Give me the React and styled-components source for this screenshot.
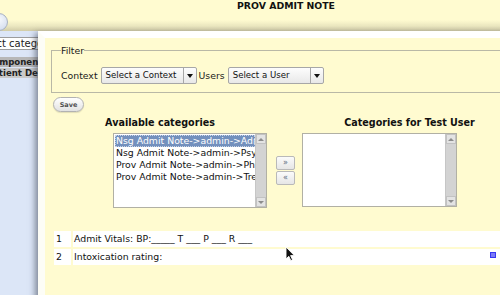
import React from "react";
import styled, { createGlobalStyle } from "styled-components";

const GlobalStyle = createGlobalStyle`
  html, body { margin: 0; padding: 0; width: 500px; height: 295px; overflow: hidden; }
  body {
    font-family: "DejaVu Sans", Verdana, sans-serif;
    font-size: 9.33px;
    color: #151515;
    background: #dce6f7;
  }
  #root { width: 500px; height: 295px; }
`;

const Page = styled.div`
  position: relative;
  width: 500px;
  height: 295px;
  overflow: hidden;
  background: #dce6f7;
`;

const Header = styled.header`
  height: 31px;
  display: flex;
  flex-direction: column;
  align-items: flex-start;
  background: linear-gradient(to bottom, #fffbd0 0%, #fffbd0 64%, #ebe7c0 84%, #d1cca7 100%);
`;

const Title = styled.h1`
  margin: 0;
  padding-left: 237px;
  font-size: 9.33px;
  line-height: 11px;
  font-weight: bold;
  color: #111;
  white-space: nowrap;
`;

const RoundButton = styled.div`
  margin: 2px 0 0 -10px;
  width: 18px;
  height: 18px;
  box-sizing: border-box;
  border-radius: 50%;
  border: 1px solid #a8b1c2;
  background: radial-gradient(circle at 50% 35%, #f6f8fc, #cdd8eb);
  display: flex;
  align-items: center;
  justify-content: flex-end;
  padding-right: 7px;
`;

const Dot = styled.span`
  width: 3px;
  height: 3px;
  border-radius: 50%;
  background: #3d63b8;
`;

const Behind = styled.div`
  display: flex;
  flex-direction: column;
  align-items: flex-start;
  margin-left: -15px;
  padding-top: 6px;
  width: 220px;
`;

const BehindInput = styled.div`
  margin-left: -13px;
  width: 160px;
  height: 13px;
  box-sizing: border-box;
  border: 1px solid #9c9c9c;
  background: #fff;
  font-size: 10px;
  line-height: 11px;
  padding-left: 2px;
  white-space: nowrap;
  color: #222;
`;

const BehindRow = styled.div`
  align-self: stretch;
  margin-top: ${(p) => p.$top}px;
  height: 10px;
  line-height: 10px;
  background: ${(p) => p.$bg};
  font-weight: bold;
  font-size: 8.6px;
  padding-left: 2px;
  white-space: nowrap;
  color: #222;
`;

const Dialog = styled.section`
  position: absolute;
  left: 38px;
  top: 31px;
  width: 540px;
  height: 290px;
  box-sizing: border-box;
  background: #fffbd0;
  border-top: 7px solid #ffffff;
  border-left: 7px solid #fdfdf6;
  box-shadow: -3px 2px 6px rgba(40, 46, 62, 0.5);
  display: flex;
  flex-direction: column;
  align-items: flex-start;
`;

const FilterSet = styled.fieldset`
  margin: 7px 0 0 6px;
  width: 480px;
  border: 1px solid #b9b8a6;
  padding: 11px 8px 8px 9px;
`;

const Legend = styled.legend`
  padding: 0;
  font-size: 9.33px;
  line-height: 11px;
  color: #1a1a1a;
`;

const FilterRow = styled.div`
  display: flex;
  align-items: center;
  gap: 2px;
  height: 17px;
`;

const Label = styled.span`
  white-space: nowrap;
  color: #1a1a1a;
  margin-right: 1px;
`;

const Select = styled.div`
  display: flex;
  width: ${(p) => p.$w}px;
  height: 17px;
  box-sizing: border-box;
  border: 1px solid #a7a7a7;
  border-radius: 2px;
  background: linear-gradient(to bottom, #fdfdfd, #e8e8e8);
  font-size: 8.6px;
  color: #111;
`;

const SelectText = styled.span`
  flex: 1;
  padding-left: 4px;
  line-height: 15px;
  white-space: nowrap;
  overflow: hidden;
`;

const SelectArrow = styled.span`
  width: 12px;
  border-left: 1px solid #a7a7a7;
  display: flex;
  align-items: center;
  justify-content: center;
`;

const Triangle = styled.span`
  width: 0;
  height: 0;
  border-left: 3px solid transparent;
  border-right: 3px solid transparent;
  border-top: ${(p) => (p.$small ? "3px solid #8c8c8c" : "4px solid #111")};
  transform: ${(p) => (p.$up ? "rotate(180deg)" : "none")};
`;

const SaveButton = styled.button`
  margin: 4px 0 0 8px;
  width: 31px;
  height: 15px;
  padding: 0;
  border: 1px solid #b2b2b2;
  border-radius: 8px;
  background: linear-gradient(to bottom, #ffffff, #e2e2e2);
  font-family: "DejaVu Sans", Verdana, sans-serif;
  font-size: 6.5px;
  font-weight: bold;
  color: #505050;
  box-shadow: 0 1px 1px rgba(0, 0, 0, 0.12);
`;

const Transfer = styled.div`
  margin: 4px 0 0 8px;
  display: grid;
  grid-template-columns: 214px 35px 215px;
  grid-template-rows: 13px 75px;
  row-gap: 4px;
`;

const ColHeading = styled.h2`
  margin: 0;
  grid-column: ${(p) => p.$col};
  text-align: center;
  font-size: 9.6px;
  line-height: 13px;
  font-weight: bold;
  color: #111;
  white-space: nowrap;
`;

const Listbox = styled.div`
  grid-column: ${(p) => p.$col};
  justify-self: ${(p) => p.$justify};
  width: ${(p) => p.$w}px;
  height: ${(p) => p.$h}px;
  box-sizing: border-box;
  border: 1px solid #b1b0a4;
  background: #fff;
  display: flex;
`;

const Options = styled.div`
  flex: 1;
  min-width: 0;
  padding: 1px 0 0 1px;
  overflow: hidden;
`;

const Option = styled.div`
  height: 12px;
  line-height: 12px;
  padding-left: 1px;
  white-space: nowrap;
  overflow: hidden;
  color: ${(p) => (p.$selected ? "#fff" : "#111")};
  background: ${(p) => (p.$selected ? "#7390bd" : "transparent")};
  outline: ${(p) => (p.$selected ? "1px dotted #c9d4e6" : "none")};
  outline-offset: -1px;
`;

const ScrollBar = styled.div`
  width: 10px;
  display: flex;
  flex-direction: column;
  background: #d3d3d3;
  border-left: 1px solid #c6c6c6;
`;

const ScrollButton = styled.div`
  height: 10px;
  box-sizing: border-box;
  border: 1px solid #c2c2c2;
  background: #e3e3e3;
  display: flex;
  align-items: center;
  justify-content: center;
`;

const ScrollTrack = styled.div`
  flex: 1;
`;

const MoveButtons = styled.div`
  grid-column: 2;
  align-self: center;
  justify-self: center;
  display: flex;
  flex-direction: column;
  gap: 1px;
  margin-left: 2px;
`;

const MoveButton = styled.button`
  width: 19px;
  height: 14px;
  padding: 0;
  border: 1px solid #b9b9b9;
  border-radius: 2px;
  background: linear-gradient(to bottom, #fbfbfb, #e6e6e6);
  font-family: "DejaVu Sans", Verdana, sans-serif;
  font-size: 8px;
  line-height: 10px;
  color: #5a6a80;
`;

const NoteTable = styled.table`
  margin: 21px 0 0 7px;
  width: 460px;
  border-spacing: 2px;
  table-layout: fixed;
`;

const NumCell = styled.td`
  width: 13px;
  padding: 0 2px;
  height: 16px;
  line-height: 16px;
  background: #fff;
  color: #111;
  vertical-align: middle;
`;

const TextCell = styled.td`
  padding: 0 14px 0 1px;
  height: 16px;
  background: #fff;
  color: #111;
`;

const CellInner = styled.div`
  display: flex;
  align-items: flex-start;
  line-height: 16px;
  white-space: nowrap;
`;

const Marker = styled.span`
  margin: 3px 0 0 auto;
  width: 6px;
  height: 6px;
  box-sizing: border-box;
  border: 1px solid #3838f2;
  background: #7b7bf6;
`;

const Cursor = styled.svg`
  position: absolute;
  left: 285px;
  top: 246px;
`;

function ListScroll() {
  return (
    <ScrollBar>
      <ScrollButton>
        <Triangle $small $up />
      </ScrollButton>
      <ScrollTrack />
      <ScrollButton>
        <Triangle $small />
      </ScrollButton>
    </ScrollBar>
  );
}

const available = [
  "Nsg Admit Note->admin->Admission",
  "Nsg Admit Note->admin->Psychiatric",
  "Prov Admit Note->admin->Physical",
  "Prov Admit Note->admin->Treatment",
];

export default function App() {
  return (
    <>
      <GlobalStyle />
      <Page>
        <Header>
          <Title>PROV ADMIT NOTE</Title>
          <RoundButton>
            <Dot />
          </RoundButton>
        </Header>
        <Behind>
          <BehindInput>Select category</BehindInput>
          <BehindRow $top={7} $bg="#b7b7b7">Component</BehindRow>
          <BehindRow $top={1} $bg="#c9c9c9">Patient Details</BehindRow>
        </Behind>

        <Dialog>
          <FilterSet>
            <Legend>Filter</Legend>
            <FilterRow>
              <Label>Context</Label>
              <Select $w={96}>
                <SelectText>Select a Context</SelectText>
                <SelectArrow>
                  <Triangle />
                </SelectArrow>
              </Select>
              <Label>Users</Label>
              <Select $w={96}>
                <SelectText>Select a User</SelectText>
                <SelectArrow>
                  <Triangle />
                </SelectArrow>
              </Select>
            </FilterRow>
          </FilterSet>

          <SaveButton>Save</SaveButton>

          <Transfer>
            <ColHeading $col={1}>Available categories</ColHeading>
            <ColHeading $col={3}>Categories for Test User</ColHeading>
            <Listbox $col={1} $justify="end" $w={154} $h={75}>
              <Options>
                {available.map((a, i) => (
                  <Option key={a} $selected={i === 0}>
                    {a}
                  </Option>
                ))}
              </Options>
              <ListScroll />
            </Listbox>
            <MoveButtons>
              <MoveButton>»</MoveButton>
              <MoveButton>«</MoveButton>
            </MoveButtons>
            <Listbox $col={3} $justify="start" $w={155} $h={74}>
              <Options />
              <ListScroll />
            </Listbox>
          </Transfer>

          <NoteTable>
            <tbody>
              <tr>
                <NumCell>1</NumCell>
                <TextCell>
                  <CellInner>Admit Vitals: BP:_____ T ___ P ___ R ___</CellInner>
                </TextCell>
              </tr>
              <tr>
                <NumCell>2</NumCell>
                <TextCell>
                  <CellInner>
                    Intoxication rating:
                    <Marker />
                  </CellInner>
                </TextCell>
              </tr>
            </tbody>
          </NoteTable>
        </Dialog>

        <Cursor width="11" height="16" viewBox="0 0 11 16">
          <path
            d="M1 1 L1 13 L3.8 10.3 L5.8 14.6 L7.6 13.8 L5.6 9.6 L9.4 9.6 Z"
            fill="#111"
            stroke="#fff"
            strokeWidth="0.9"
            strokeLinejoin="round"
          />
        </Cursor>
      </Page>
    </>
  );
}
